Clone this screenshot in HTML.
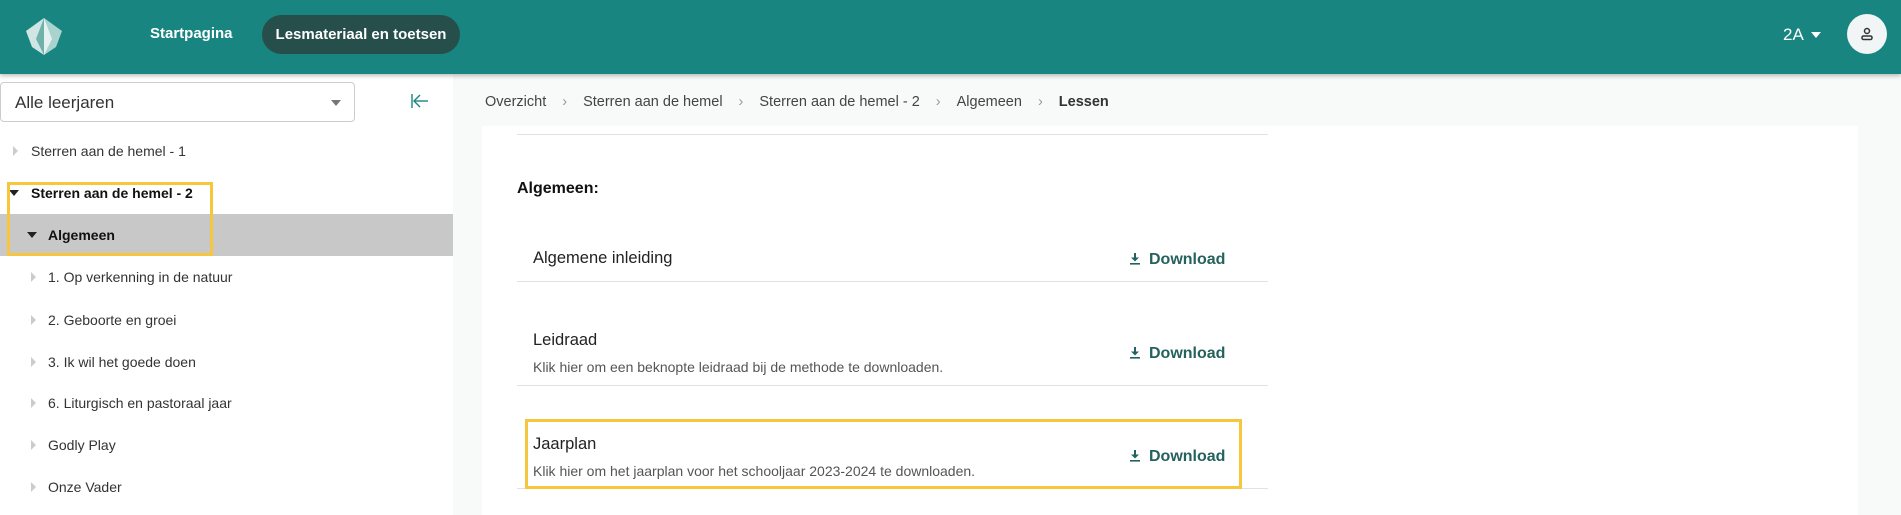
<!DOCTYPE html>
<html><head><style>
*{box-sizing:border-box;margin:0;padding:0}
body{width:1901px;height:515px;overflow:hidden;background:#f8fafa;font-family:"Liberation Sans",sans-serif;position:relative;color:#222}
.a{position:absolute;white-space:nowrap}
.hdr{position:absolute;left:0;top:0;width:1901px;height:74px;background:#188580;box-shadow:0 2px 4px rgba(0,0,0,.25);z-index:2}
.side{position:absolute;left:0;top:74px;width:453px;height:441px;background:#fff}
.tree{font-size:14px;color:#333}
.tri{position:absolute;width:0;height:0}
.tr{border-left:5px solid #ccc;border-top:5px solid transparent;border-bottom:5px solid transparent}
.td{border-top:6px solid #222;border-left:5px solid transparent;border-right:5px solid transparent}
.card{position:absolute;left:482px;top:126px;width:1376px;height:389px;background:#fff}
.line{position:absolute;left:517px;width:751px;height:1px;background:#e2e2e2}
.dl{color:#25625d;font-weight:bold;font-size:16px}
.dl svg{vertical-align:-1px;margin-right:9px}
.sub{font-size:14px;color:#555}
.tt{font-size:16.5px;color:#222}
.bc span{color:#999;margin:0 16px}
</style></head><body>
<div class="hdr">
<svg class="a" style="left:22px;top:17px" width="44" height="40" viewBox="0 0 44 40">
<polygon points="22,1 4,14 10,30 22,38" fill="#cfe6e4"/>
<polygon points="22,1 40,14 34,30 22,38" fill="#a9d3cf"/>
<polygon points="22,1 14,22 22,38" fill="#6fb2ab"/>
<polygon points="22,1 30,22 22,38" fill="#e6f2f1"/>
</svg>
<div class="a" style="left:150px;top:25px;color:#fff;font-weight:bold;font-size:15px">Startpagina</div>
<div class="a" style="left:262px;top:15px;width:198px;height:39px;border-radius:20px;background:#264e4b;color:#fff;font-weight:bold;font-size:15px;text-align:center;line-height:39px">Lesmateriaal en toetsen</div>
<div class="a" style="left:1783px;top:25px;color:#fff;font-size:17px">2A</div>
<div class="tri a" style="left:1811px;top:32px;border-top:6px solid #fff;border-left:5px solid transparent;border-right:5px solid transparent"></div>
<div class="a" style="left:1847px;top:14px;width:40px;height:40px;border-radius:50%;background:#f1f5f5"></div>
<svg class="a" style="left:1860px;top:27px" width="14" height="14" viewBox="0 0 14 14" fill="none" stroke="#333" stroke-width="1.5"><circle cx="7" cy="4" r="2.5"/><rect x="2" y="9" width="10" height="3.5" rx="1.5"/></svg>
</div>
<div class="side"></div>
<div class="a" style="left:0;top:82px;width:355px;height:40px;border:1px solid #ccc;border-radius:4px;background:#fff;font-size:17px;color:#333;padding:10px 14px">Alle leerjaren</div>
<div class="tri a" style="left:331px;top:100px;border-top:6px solid #777;border-left:5px solid transparent;border-right:5px solid transparent"></div>
<svg class="a" style="left:411px;top:93px" width="18" height="16" viewBox="0 0 18 16" fill="none" stroke="#188580" stroke-width="1.4"><line x1="1" y1="1" x2="1" y2="15"/><line x1="3" y1="8" x2="17" y2="8"/><polyline points="9,2 3,8 9,14"/></svg>
<div class="a" style="left:0;top:214px;width:453px;height:42px;background:#c8c8c8"></div>
<div class="tree">
<div class="tri tr a" style="left:13px;top:146px"></div><div class="a" style="left:31px;top:143px">Sterren aan de hemel - 1</div>
<div class="tri td a" style="left:9px;top:190px"></div><div class="a" style="left:31px;top:185px;font-weight:bold;color:#111">Sterren aan de hemel - 2</div>
<div class="tri td a" style="left:27px;top:232px"></div><div class="a" style="left:48px;top:227px;font-weight:bold;color:#111">Algemeen</div>
<div class="tri tr a" style="left:31px;top:272px"></div><div class="a" style="left:48px;top:269px">1. Op verkenning in de natuur</div>
<div class="tri tr a" style="left:31px;top:315px"></div><div class="a" style="left:48px;top:312px">2. Geboorte en groei</div>
<div class="tri tr a" style="left:31px;top:357px"></div><div class="a" style="left:48px;top:354px">3. Ik wil het goede doen</div>
<div class="tri tr a" style="left:31px;top:398px"></div><div class="a" style="left:48px;top:395px">6. Liturgisch en pastoraal jaar</div>
<div class="tri tr a" style="left:31px;top:440px"></div><div class="a" style="left:48px;top:437px">Godly Play</div>
<div class="tri tr a" style="left:31px;top:482px"></div><div class="a" style="left:48px;top:479px">Onze Vader</div>
</div>
<div class="a" style="left:7px;top:182px;width:206px;height:74px;border:3px solid #f7c63f"></div>
<div class="a bc" style="left:485px;top:94px;font-size:14.5px;color:#444">Overzicht<span>›</span>Sterren aan de hemel<span>›</span>Sterren aan de hemel - 2<span>›</span>Algemeen<span>›</span><b style="color:#333">Lessen</b></div>
<div class="card"></div>
<div class="line" style="top:134px"></div>
<div class="a" style="left:517px;top:180px;font-size:16px;font-weight:bold;color:#111">Algemeen:</div>
<div class="a tt" style="left:533px;top:249px">Algemene inleiding</div>
<div class="line" style="top:281px"></div>
<div class="a tt" style="left:533px;top:331px">Leidraad</div>
<div class="a sub" style="left:533px;top:359px">Klik hier om een beknopte leidraad bij de methode te downloaden.</div>
<div class="line" style="top:385px"></div>
<div class="a tt" style="left:533px;top:435px">Jaarplan</div>
<div class="a sub" style="left:533px;top:463px">Klik hier om het jaarplan voor het schooljaar 2023-2024 te downloaden.</div>
<div class="line" style="top:488px"></div>
<div class="a" style="left:525px;top:419px;width:717px;height:70px;border:3px solid #f7c63f"></div>
<div class="a dl" style="left:1130px;top:251px"><svg width="10" height="12" viewBox="0 0 10 12"><rect x="4" y="0" width="2" height="5" fill="#25625d"/><polygon points="1,4.5 9,4.5 5,8.5" fill="#25625d"/><rect x="0" y="10" width="10" height="1.6" fill="#25625d"/></svg>Download</div>
<div class="a dl" style="left:1130px;top:345px"><svg width="10" height="12" viewBox="0 0 10 12"><rect x="4" y="0" width="2" height="5" fill="#25625d"/><polygon points="1,4.5 9,4.5 5,8.5" fill="#25625d"/><rect x="0" y="10" width="10" height="1.6" fill="#25625d"/></svg>Download</div>
<div class="a dl" style="left:1130px;top:448px"><svg width="10" height="12" viewBox="0 0 10 12"><rect x="4" y="0" width="2" height="5" fill="#25625d"/><polygon points="1,4.5 9,4.5 5,8.5" fill="#25625d"/><rect x="0" y="10" width="10" height="1.6" fill="#25625d"/></svg>Download</div>
</body></html>
